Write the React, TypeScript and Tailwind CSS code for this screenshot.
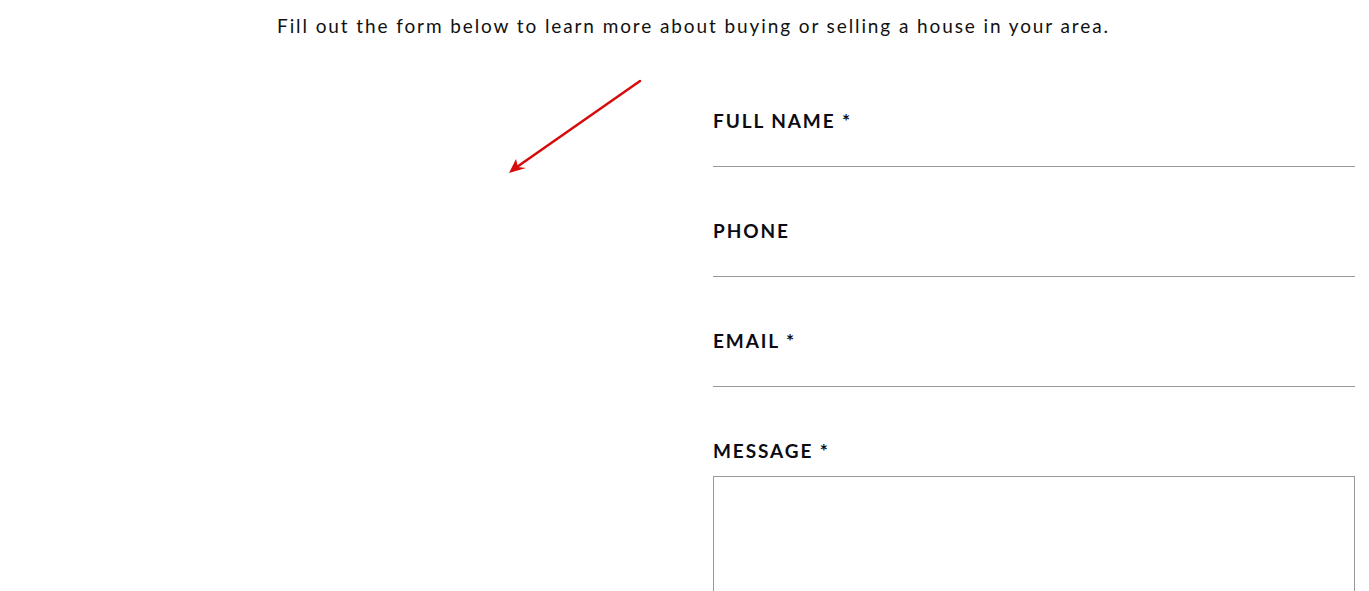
export default function App() {
  const fields = [
    { label: "FULL NAME *", type: "text" },
    { label: "PHONE", type: "tel" },
    { label: "EMAIL *", type: "email" },
  ];

  return (
    <div className="h-[591px] w-full overflow-hidden bg-white font-['Lato',sans-serif] text-[#111]">
      <p className="pt-[14px] pl-[18px] text-center text-[19px] leading-[24px] tracking-[0.1em]">
        Fill out the form below to learn more about buying or selling a house in your area.
      </p>

      <div className="mt-[41px] flex">
        {/* Left: arrow pointing at the form */}
        <div className="w-[713px] shrink-0">
          <svg
            className="ml-[506px]"
            width="140"
            height="100"
            viewBox="0 0 140 100"
            fill="none"
          >
            <line x1="134" y1="2" x2="8" y2="90" stroke="#d60b0b" strokeWidth="2.5" strokeLinecap="round" />
            <path d="M3 94 L10 80 L12 88 L20 89 Z" fill="#d60b0b" />
          </svg>
        </div>

        {/* Right: form */}
        <form className="flex w-[642px] flex-col pt-[30px]">
          {fields.map((f) => (
            <label key={f.label} className="mb-[52px] flex flex-col">
              <span className="text-[19px] font-bold leading-[24px] tracking-[0.1em] text-[#0b0b14]">{f.label}</span>
              <input
                type={f.type}
                className="h-[34px] w-full border-b border-[#999] bg-transparent outline-none"
              />
            </label>
          ))}
          <label className="flex flex-col">
            <span className="text-[19px] font-bold leading-[24px] tracking-[0.1em] text-[#0b0b14]">MESSAGE *</span>
            <textarea className="mt-[13px] h-[160px] w-[642px] resize-none border border-[#999] outline-none" />
          </label>
        </form>
      </div>
    </div>
  );
}
